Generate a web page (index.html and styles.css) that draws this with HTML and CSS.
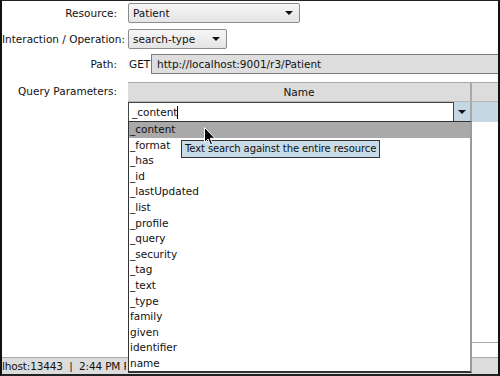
FILE: index.html
```html
<!DOCTYPE html>
<html>
<head>
<meta charset="utf-8">
<link rel="stylesheet" href="styles.css">
</head>
<body>
<div class="frame">
  <div class="form">
    <div class="row r1">
      <div class="label">Resource:</div>
      <div class="select sel-resource"><span>Patient</span><span class="arrow"></span></div>
    </div>
    <div class="row r2">
      <div class="label">Interaction / Operation:</div>
      <div class="select sel-op"><span>search-type</span><span class="arrow"></span></div>
    </div>
    <div class="row r3">
      <div class="label">Path:</div>
      <span class="verb">GET</span>
      <div class="pathbox">http://localhost:9001/r3/Patient</div>
    </div>
    <div class="row r4">
      <div class="label qlabel">Query Parameters:</div>
      <div class="table">
        <div class="thead">
          <div class="th name">Name</div>
          <div class="th extra"></div>
        </div>
        <div class="trow">
          <div class="td name">
            <div class="combo"><span class="caret-text">_content</span></div>
            <div class="combo-btn"><span class="arrow"></span></div>
          </div>
          <div class="td extra"></div>
        </div>
        <div class="tbody">
          <div class="td name"></div>
          <div class="td extra"></div>
        </div>
      </div>
    </div>
  </div>
  <div class="status"><span class="status-text">lhost:13443 &nbsp;| &nbsp;2:44 PM PDT</span></div>

  <ul class="popup">
    <li class="hl">_content</li>
    <li>_format</li>
    <li>_has</li>
    <li>_id</li>
    <li>_lastUpdated</li>
    <li>_list</li>
    <li>_profile</li>
    <li>_query</li>
    <li>_security</li>
    <li>_tag</li>
    <li>_text</li>
    <li>_type</li>
    <li>family</li>
    <li>given</li>
    <li>identifier</li>
    <li>name</li>
  </ul>
  <div class="tooltip">Text search against the entire resource</div>
  <svg class="cursor" width="12" height="19" viewBox="0 0 12 19">
    <path d="M0.5 0.5 L0.5 15.5 L4 12 L6.5 17.8 L8.6 16.9 L6.2 11.3 L11 11.3 Z" fill="#000" stroke="#fff" stroke-width="1"/>
  </svg>
</div>
</body>
</html>
```
FILE: styles.css
```css
* { box-sizing: border-box; }
html, body { margin: 0; padding: 0; background: #fff; }
body {
  font-family: "DejaVu Sans", sans-serif;
  font-size: 10.5px;
  color: #111;
}
.frame {
  position: relative;
  width: 500px;
  height: 376px;
  border-left: 2px solid #111;
  border-right: 2px solid #111;
  border-top: 1px solid #222;
  border-bottom: 2px solid #222;
  background: #fff;
  overflow: hidden;
  display: flex;
  flex-direction: column;
}
.form {
  flex: 1;
  display: flex;
  flex-direction: column;
  padding-top: 2px;
  min-height: 0;
}
.row {
  display: flex;
  align-items: center;
  column-gap: 11px;
  height: 20px;
  flex: none;
}
.r2 { margin-top: 6px; }
.r3 { margin-top: 5px; column-gap: 0; }
.r4 { margin-top: 8px; height: 261px; align-items: flex-start; }
.label { width: 115px; flex: none; text-align: right; white-space: nowrap; }
.r3 .label { margin-right: 11px; }
.qlabel { padding-top: 3px; }
.select {
  height: 20px;
  border: 1px solid #8c8c8c;
  border-radius: 2px;
  background: linear-gradient(#f6f6f6, #e4e4e4);
  display: flex;
  align-items: center;
  justify-content: space-between;
  padding: 0 6px 0 4px;
}
.sel-resource { width: 172px; }
.sel-op { width: 99px; }
.arrow {
  width: 0; height: 0;
  border-left: 4px solid transparent;
  border-right: 4px solid transparent;
  border-top: 4px solid #111;
}
.verb { width: 23px; padding-left: 1px; flex: none; }
.pathbox {
  flex: 1;
  height: 20px;
  background: #dedede;
  border: 1px solid #7a7a7a;
  border-right: none;
  padding: 0 5px;
  display: flex;
  align-items: center;
  white-space: nowrap;
}
.table {
  flex: 1;
  height: 261px;
  border-top: 1px solid #a8a8a8;
  border-bottom: 1px solid #a8a8a8;
  display: flex;
  flex-direction: column;
}
.thead, .trow, .tbody { display: flex; }
.thead { height: 19px; background: #dcdcdc; border-bottom: 1px solid #b8b8b8; }
.th { display: flex; align-items: center; justify-content: center; }
.name { width: 344px; border-right: 2px solid #a8a8a8; }
.extra { flex: 1; }
.trow { height: 20px; background: #c5d7e3; }
.td.name { display: flex; }
.combo {
  flex: 1;
  background: #fff;
  border: 1px solid #444;
  border-bottom: none;
  display: flex;
  align-items: center;
  padding-left: 3px;
}
.caret-text { border-right: 1px solid #000; line-height: 13px; }
.combo-btn { width: 16px; display: flex; align-items: center; justify-content: center; }
.tbody { flex: 1; }
.status {
  height: 17px;
  flex: none;
  background: #dcdcdc;
  border-top: 1px solid #a8a8a8;
  display: flex;
  align-items: center;
  white-space: nowrap;
}
.status-text {
  display: block;
  width: 124px;
  overflow: hidden;
  white-space: nowrap;
  letter-spacing: -0.15px;
}
.popup {
  position: absolute;
  left: 126px;
  top: 120px;
  width: 344px;
  height: 252px;
  margin: 0;
  padding: 0;
  list-style: none;
  background: #fff;
  border-left: 1px solid #333;
  border-bottom: 2px solid #333;
  border-right: 2px solid #9a9a9a;
  border-top: 1px solid #333;
}
.popup li {
  height: 15.6px;
  line-height: 15.6px;
  padding-left: 1px;
}
.popup li.hl { background: #a9a9a9; }
.tooltip {
  position: absolute;
  left: 179px;
  top: 139px;
  height: 18px;
  padding: 0 3px;
  background: #c8dbe8;
  border: 1px solid #333;
  line-height: 16px;
  font-size: 10px;
  letter-spacing: -0.1px;
  white-space: nowrap;
}
.cursor { position: absolute; left: 202px; top: 126px; }
```
